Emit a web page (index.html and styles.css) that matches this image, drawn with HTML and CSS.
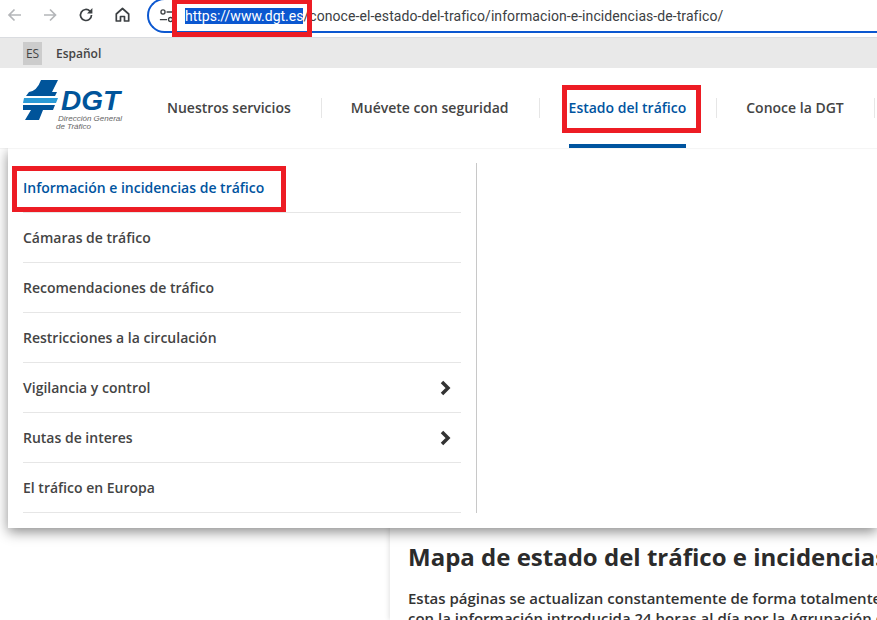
FILE: index.html
```html
<!DOCTYPE html>
<html lang="es">
<head>
<meta charset="utf-8">
<title>Información e incidencias de tráfico</title>
<link rel="stylesheet" href="styles.css">
</head>
<body>
<div class="chrome">
  <div class="nav-icons">
    <svg class="ic" viewBox="0 0 20 20"><path d="M16 10H4.500M9.500 4.500 4 10l5.500 5.500" fill="none" stroke="#b4b6b9" stroke-width="1.700"/></svg>
    <svg class="ic" viewBox="0 0 20 20"><path d="M3 10h11.500M9 4.500 14.500 10 9 15.500" fill="none" stroke="#b4b6b9" stroke-width="1.700"/></svg>
    <svg class="ic" viewBox="0 0 20 20"><path d="M14.500 10a5.500 5.500 0 1 1-1.600-3.900L14.500 7.700" fill="none" stroke="#3c4043" stroke-width="1.700"/><path d="M15.400 3v5.400H10z" fill="#3c4043"/></svg>
    <svg class="ic" viewBox="0 0 20 20"><path d="M9.500 3.500 3.300 9v7h4.200v-4.500h4V16h4.200V9z" fill="none" stroke="#3c4043" stroke-width="1.700" stroke-linejoin="round"/></svg>
  </div>
  <div class="omnibox">
    <svg class="tune" viewBox="0 0 18 18"><circle cx="4.500" cy="4.500" r="2.300" fill="none" stroke="#3c4043" stroke-width="1.500"/><path d="M8.500 4.500H17M1 13h8" stroke="#3c4043" stroke-width="1.500"/><circle cx="13" cy="13" r="2.300" fill="none" stroke="#3c4043" stroke-width="1.500"/></svg>
    <span class="url"><span class="sel">https://www.dgt.es</span><span class="url-rest">/conoce-el-estado-del-trafico/informacion-e-incidencias-de-trafico/</span></span>
  </div>
</div>
<div class="langbar"><span class="lang-code">ES</span><span class="lang-name">Español</span></div>
<header class="site-header">
  <a class="logo">
    <svg class="cross" viewBox="0 0 37 42"><path d="M18 0H35L29 12H34L32 16H3L6 12Q14 11 18 0Z" fill="#00549a"/><path d="M1 18H35L33 23H0Z" fill="#2a9ad6"/><path d="M0 25H32L30 30H20L16 40H2L8 30H0Z" fill="#00549a"/></svg>
    <span class="logo-text"><span class="logo-dgt">DGT</span><span class="logo-sub">Dirección General<br>de Tráfico</span></span>
  </a>
  <nav class="main-nav">
    <a class="nav-item n1">Nuestros servicios</a>
    <a class="nav-item n2">Muévete con seguridad</a>
    <a class="nav-item n3 active">Estado del tráfico</a>
    <a class="nav-item n4">Conoce la DGT</a>
  </nav>
</header>
<main class="content">
  <div class="card">
    <h1>Mapa de estado del tráfico e incidencias</h1>
    <p>Estas páginas se actualizan constantemente de forma totalmente automática<br>con la información introducida 24 horas al día por la Agrupación de Tráfico</p>
  </div>
</main>
<div class="dropdown">
  <ul class="menu">
    <li class="current">Información e incidencias de tráfico</li>
    <li>Cámaras de tráfico</li>
    <li>Recomendaciones de tráfico</li>
    <li>Restricciones a la circulación</li>
    <li>Vigilancia y control<svg class="chev" viewBox="0 0 12 16"><path d="M2 2 8 8l-6 6" fill="none" stroke="#333" stroke-width="3.500"/></svg></li>
    <li>Rutas de interes<svg class="chev" viewBox="0 0 12 16"><path d="M2 2 8 8l-6 6" fill="none" stroke="#333" stroke-width="3.500"/></svg></li>
    <li>El tráfico en Europa</li>
  </ul>
</div>
<div class="mark m1"></div>
<div class="mark m2"></div>
<div class="mark m3"></div>
</body>
</html>
```
FILE: styles.css
```css
* { box-sizing: border-box; }
html, body { margin: 0; height: 620px; overflow: hidden; }
body { position: relative; width: 877px; background: #fff; font-family: "Open Sans", sans-serif; color: #333; }

.chrome { height: 38px; display: flex; background: #fff; border-bottom: 1px solid #dadce0; overflow: hidden; }
.nav-icons { display: flex; gap: 16px; padding: 5px 0 0 5px; width: 147px; }
.ic { width: 20px; height: 20px; }
.omnibox { flex: 1; height: 35px; margin-top: -2px; border: 2px solid #0b57d0; border-right: 0; border-radius: 20px 0 0 20px; display: flex; align-items: center; padding: 0 0 0 10px; margin-right: -20px; }
.tune { width: 16px; height: 16px; flex: none; }
.url { margin-left: 10px; font-family: Roboto, "Open Sans", sans-serif; font-size: 14px; line-height: 22px; color: #3c4043; white-space: nowrap; }
.sel { background: #0b57d0; color: #fff; }
.url-rest { letter-spacing: .07px; }

.langbar { height: 30px; background: #e9e9e9; display: flex; align-items: center; padding-left: 23px; font-size: 12px; font-weight: 600; color: #444; }
.lang-code { width: 19px; height: 23px; background: #ccc; display: flex; align-items: center; justify-content: center; font-weight: 400; }
.lang-name { margin-left: 14px; }

.site-header { position: relative; z-index: 3; height: 80px; display: flex; background: #fff; box-shadow: 0 1px 1px rgba(0,0,0,.04); padding-left: 23px; }
.logo { width: 144px; display: flex; padding-top: 12px; }
.cross { width: 37px; height: 42px; flex: none; }
.logo-text { display: flex; flex-direction: column; margin-left: 1px; }
.logo-dgt { font-family: "Liberation Sans", sans-serif; font-style: italic; font-weight: 700; font-size: 28px; line-height: 24px; color: #00549a; margin-top: 9px; }
.logo-sub { font-family: "Liberation Sans", sans-serif; font-style: italic; font-size: 8px; line-height: 8px; color: #666; margin: 2px 0 0 -5px; white-space: nowrap; text-indent: 2px; }

.main-nav { display: flex; }
.nav-item { display: block; position: relative; padding-top: 29px; font-size: 14px; font-weight: 600; line-height: 22px; color: #444; white-space: nowrap; }
.nav-item::after { content: ""; position: absolute; top: 30px; right: -31px; width: 1px; height: 20px; background: #e6e6e6; }
.n1, .n2, .n3 { margin-right: 60px; }
.active { color: #00549f; }
.active::before { content: ""; position: absolute; left: 0; right: 0; bottom: 0; height: 4px; background: #00549f; }

.content { display: flex; justify-content: flex-end; height: 472px; }
.card { width: 487px; padding: 0 0 0 18px; box-shadow: -1px 0 5px rgba(0,0,0,.12); overflow: hidden; white-space: nowrap; }
.card h1 { margin: 394px 0 0; font-size: 24px; line-height: 30px; font-weight: 700; color: #2b2b2b; }
.card p { margin: 16px 0 0; font-size: 15px; line-height: 20px; font-weight: 600; color: #333; }

.dropdown { position: absolute; left: 8px; top: 148px; width: 869px; height: 380px; background: #fff; box-shadow: 0 4px 12px rgba(0,0,0,.45); padding: 15px 0 0 15px; z-index: 2; }
.menu { list-style: none; margin: 0; padding: 0 15px 0 0; width: 454px; height: 350px; border-right: 1px solid #c8c8c8; }
.menu li { height: 50px; display: flex; align-items: center; justify-content: space-between; border-bottom: 1px solid #e6e6e6; font-size: 14px; font-weight: 600; color: #444; padding-right: 9px; }
.menu .current { color: #00549f; }
.chev { width: 12px; height: 16px; }

.mark { position: absolute; border: 5px solid #ed1c24; z-index: 5; }
.m1 { left: 172px; top: -1px; width: 140px; height: 38px; }
.m2 { left: 562px; top: 85px; width: 139px; height: 48px; }
.m3 { left: 12px; top: 166px; width: 274px; height: 46px; }
```
